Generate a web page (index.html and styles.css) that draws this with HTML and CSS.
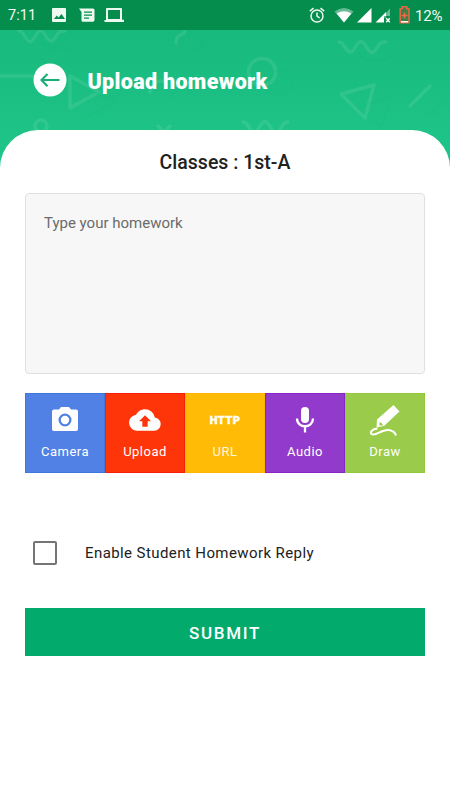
FILE: index.html
```html
<!DOCTYPE html>
<html lang="en">
<head>
<meta charset="utf-8">
<title>Upload homework</title>
<link rel="stylesheet" href="styles.css">
</head>
<body>
<div class="statusbar">
  <span class="time">7:11</span>
  <svg class="notices" width="76" height="30" viewBox="0 0 76 30" fill="#eefaf0">
    <path fill-rule="evenodd" d="M4 8h12q1 0 1 1v12q0 1-1 1H4q-1 0-1-1V9q0-1 1-1zM5 19h11l-3.500-5-3 3.500-1.800-2z"/>
    <path fill-rule="evenodd" d="M30 8.500h14q1.500 0 1.500 1.500v10q0 1.800-1.500 1.800H34q-1.500 0-1.500-1.500V12zM35 11.500v1.300h8v-1.300zm0 3v1.300h8v-1.300zm0 3v1.300h5v-1.300z"/>
    <path fill-rule="evenodd" d="M58 8h14q1 0 1 1v10.700h2V22H55.500v-2H57V9q0-1 1-1zm1 2v9h12v-9z"/>
  </svg>
  <svg class="system" width="110" height="30" viewBox="304 0 110 30">
    <g fill="none" stroke="#eefaf0" stroke-width="1.500"><circle cx="317" cy="16" r="6"/><path d="M317 12.500V16l2.700 2M309.800 11.200l3.700-3M324.200 11.200l-3.700-3"/></g>
    <path fill="#fff" opacity=".4" d="M334.500 11.500Q344 4.500 353.500 11.500L344 22.500z"/>
    <path fill="#fff" d="M336.700 13.500Q344 9 351.300 13.500L344 22.500z"/>
    <path fill="#fff" d="M357 22.500L371.500 8v14.500z"/>
    <path fill="#fff" opacity=".4" d="M382 17.500L390 8.500V16h-4v2z"/>
    <path fill="#fff" d="M375.500 22.500L386 12v4h-2v6.500z"/>
    <path stroke="#fff" stroke-width="1.400" d="M386.200 18.200l3.600 4M389.800 18.200l-3.600 4"/>
    <path fill="#8a7043" fill-opacity=".4" stroke="#dd6a45" stroke-width="1.600" d="M400.200 8.800h2V6.800h4.600v2h2.200v14h-8.800z"/>
    <path stroke="#ee6a48" stroke-width="1.600" d="M401.500 15.500h6M404.500 12.500v6"/>
    <path fill="#fff" d="M401 21h7.200v1.500H401z"/>
  </svg>
  <span class="battery">12%</span>
</div>
<header class="header">
  <svg class="pattern" width="450" height="150" viewBox="0 30 450 150" fill="none">
    <g stroke="#fff" stroke-opacity=".09" stroke-width="3.500" stroke-linecap="round" stroke-linejoin="round">
      <path d="M19 31q3 0 5 4c5 9 7 9 12 0 4-6 5-6 9 0 5 9 8 7 12 0 2-4 4-4 8-4"/>
      <path d="M185 22v8q0 4-5 5-4 2-4 8"/>
      <path d="M1 76h35M70 76v32l29-16zM150 92q2-12 14-11"/>
      <circle cx="41" cy="126" r="6"/>
      <path d="M158 126l12 12M170 126l-12 12"/>
      <circle cx="262" cy="72" r="13.500"/>
      <path d="M339 42q3 0 5 4c5 8 8 8 12 0 4-6 6-6 10 0 4 9 8 8 12 0 2-4 4-4 8-4"/>
      <path d="M243 122q3 0 5 4c5 8 8 8 12 0 4-6 6-6 10 0 4 9 8 8 12 0 2-4 4-4 6-4"/>
      <path d="M341 94l33-9-9 33zM410 106l20-20"/>
    </g>
    <g stroke="#00b978" stroke-opacity=".13" stroke-width="1.500">
      <path d="M42 42q8 12 16 4 6 4 14 3M88 90v28l28-17zM358 53q8 12 18 6 10 5 20-6M358 108l33-12-9 31zM430 115l20-19M193 34l10 10-8 8"/>
      <circle cx="281" cy="82" r="12"/>
      <path d="M170 98l8-10M188 89l8 8"/>
    </g>
  </svg>
  <div class="titlebar">
    <svg width="34" height="34" viewBox="0 0 34 34"><circle cx="17" cy="17" r="16.500" fill="#fff"/><path d="M26.500 17H9M14.500 11L8.500 17l6 6.200" fill="none" stroke="#18ad73" stroke-width="2.100"/></svg>
    <h1>Upload homework</h1>
  </div>
</header>
<main class="card">
  <h2>Classes : 1st-A</h2>
  <div class="input">Type your homework</div>
  <div class="tools">
    <div class="tool camera">
      <svg width="32" height="32" viewBox="0 0 32 32"><path fill="#fff" fill-rule="evenodd" d="M12 3h8l2 2.500h5q2 0 2 2V25q0 2-2 2H5q-2 0-2-2V7.500q0-2 2-2h5zM16 9.500a6.500 6.500 0 1 0 0 13 6.500 6.500 0 0 0 0-13zm0 2.300a4.200 4.200 0 1 1 0 8.400 4.200 4.200 0 0 1 0-8.400z"/></svg>
      <span>Camera</span></div>
    <div class="tool upload">
      <svg width="32" height="32" viewBox="0 0 24 24"><path fill="#fff" fill-rule="evenodd" d="M19.350 10.040A7.490 7.490 0 0 0 12 4C9.110 4 6.600 5.640 5.350 8.040A6 6 0 0 0 6 20h13a5 5 0 0 0 .350-9.960zM14 13v4h-4v-4H7.500L12 8.500l4.500 4.500z"/></svg>
      <span>Upload</span></div>
    <div class="tool url"><b>HTTP</b><span>URL</span></div>
    <div class="tool audio">
      <svg width="32" height="32" viewBox="0 0 32 32"><rect x="12" y="3" width="8" height="16" rx="4" fill="#fff"/><path d="M8 14.500c0 10.300 16 10.300 16 0M16 22v6.500" fill="none" stroke="#fff" stroke-width="2.300"/></svg>
      <span>Audio</span></div>
    <div class="tool draw">
      <svg width="32" height="32" viewBox="0 0 32 32"><path fill="#fff" fill-rule="evenodd" d="M24.500 1l6 6.500L15 22l-7.500 1.500L8 15.500zM10.500 18v3.500H14l-1-2z"/><path d="M8.500 24.500C2.500 25 1 28.500 2.500 30c4 3 10-5 17-4 4 .5 6.500 2 7.500 5.500" fill="none" stroke="#fff" stroke-width="2"/></svg>
      <span>Draw</span></div>
  </div>
  <label class="reply"><i class="box"></i><span>Enable Student Homework Reply</span></label>
  <div class="submit">SUBMIT</div>
</main>
</body>
</html>
```
FILE: styles.css
```css
* { box-sizing: border-box; }
body { margin: 0; width: 450px; height: 800px; overflow: hidden; background: #fff; font-family: Roboto, sans-serif; color: #212121; }
svg { display: block; flex: none; }
.statusbar { height: 30px; display: flex; align-items: center; background: #048d4d; color: #f2fbf4; font-size: 14.5px; padding: 1px 0 0 8px; }
.statusbar svg { margin-top: -1px; }
.time { width: 41px; letter-spacing: .1px; }
.system { margin-left: 179px; }
.battery { margin-left: 1px; font-size: 15px; letter-spacing: -.2px; }
.header { height: 150px; position: relative; background: linear-gradient(#18b97c, #1ec387 70%); }
.pattern { position: absolute; inset: 0; }
.titlebar { position: relative; height: 100px; display: flex; align-items: center; padding-left: 33px; gap: 20.5px; }
h1 { margin: 3px 0 0; color: #fff; font-size: 21.5px; font-weight: 900; line-height: 28px; letter-spacing: .32px; white-space: nowrap; }
.card { position: relative; margin-top: -50px; height: 670px; background: #fff; border-radius: 38px 38px 0 0; padding: 20px 25px 0; }
h2 { margin: 0; text-align: center; font-size: 19.5px; line-height: 26px; font-weight: 500; }
.input { margin-top: 17px; height: 181px; background: #f7f7f7; border: 1.5px solid #e0e0e0; border-radius: 4px; padding: 19px 18px; font-size: 15px; line-height: 20px; color: #6b6b6b; }
.tools { margin-top: 18.5px; display: grid; grid-template-columns: repeat(5, 80px); height: 80px; }
.tool { display: flex; flex-direction: column; align-items: center; color: #fff; border: 1px solid; padding-top: 10px; font-size: 13px; line-height: 16px; letter-spacing: .5px; }
.tool span { margin-top: 8px; }
.camera { background: #5281e5; border-color: #3f76df; }
.upload { background: #ff350a; border-color: #f81f0a; }
.url { background: #ffbb05; border-color: #ffb500; }
.audio { background: #923acc; border-color: #8624c7; }
.draw { background: #9acb4b; border-color: #92c93a; }
.url b { height: 32px; font-size: 11px; line-height: 33px; font-weight: 900; -webkit-text-stroke: .4px #fff; }
.url span { color: #fff6e0; }
.reply { display: flex; align-items: center; height: 30px; margin-top: 65px; padding-left: 8px; font-size: 15px; }
.reply span { letter-spacing: .41px; }
.box { width: 24px; height: 24px; margin-right: 28px; border: 2px solid #757575; border-radius: 2px; }
.submit { margin-top: 40px; height: 48px; background: #02ab6c; color: #fff; text-align: center; font-size: 17px; line-height: 50px; font-weight: 500; letter-spacing: 1.7px; }
```
